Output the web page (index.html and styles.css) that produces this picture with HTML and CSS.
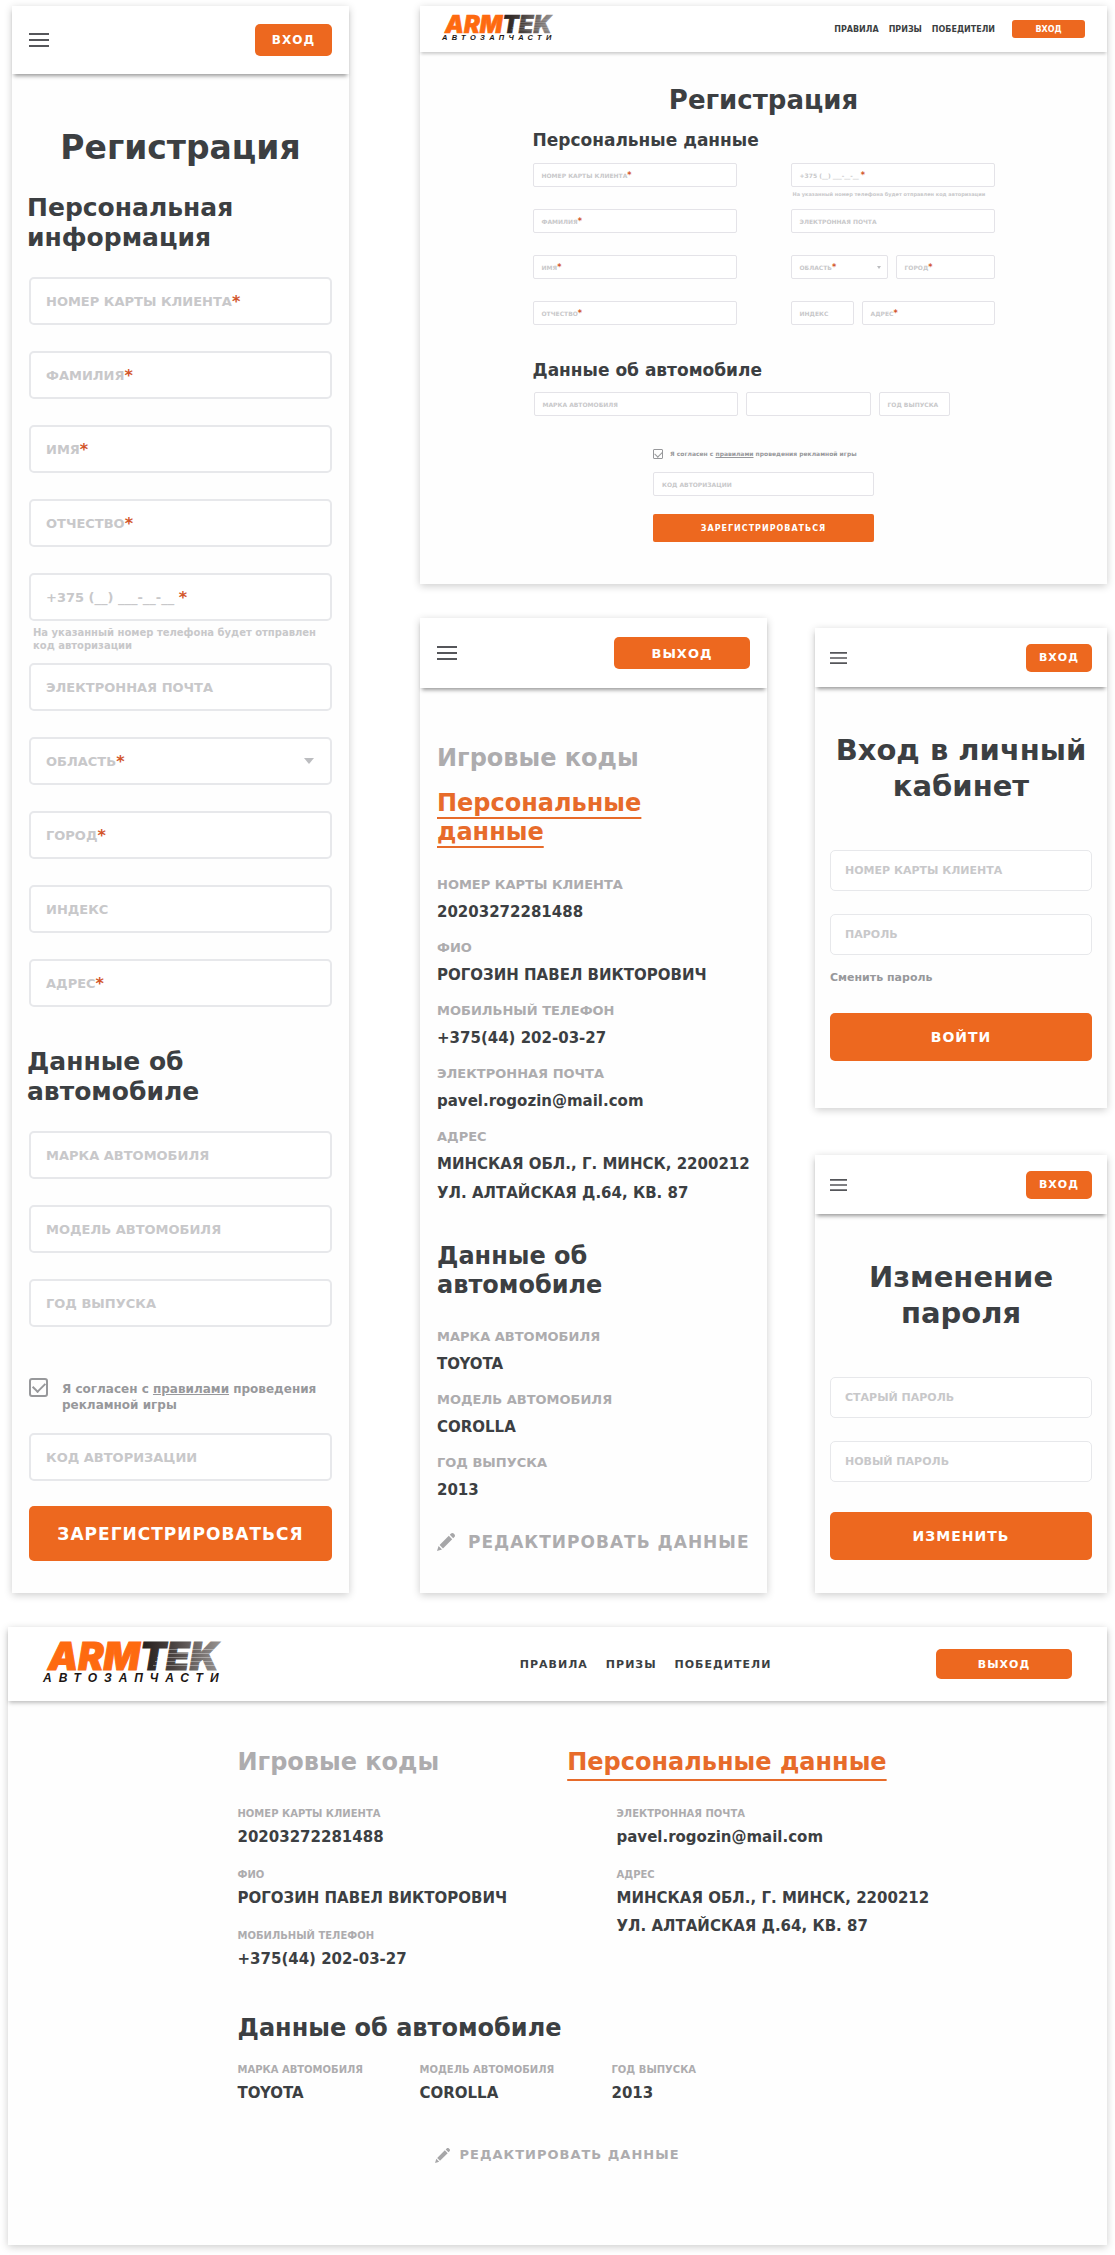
FILE: index.html
```html
<!DOCTYPE html>
<html lang="ru">
  <head>
    <meta charset="UTF-8" />
    <meta name="viewport" content="width=device-width, initial-scale=1.0" />
    <title>ARMTEK Автозапчасти</title>
    <link rel="stylesheet" href="styles.css">
  </head>
  <body>
    <svg class="sprite" aria-hidden="true">
      <defs>
        <linearGradient id="steel" gradientUnits="userSpaceOnUse" x1="90" y1="0" x2="180" y2="0">
          <stop offset="0" stop-color="#1c1512" />
          <stop offset="0.45" stop-color="#4a4341" />
          <stop offset="1" stop-color="#9b9795" />
        </linearGradient>
      </defs>
      <symbol id="logo" viewBox="0 0 186 38" overflow="visible">
        <text class="logo-name" x="5" y="25"><tspan fill="#fe6a10" stroke="#fe6a10">ARM</tspan><tspan fill="url(#steel)" stroke="url(#steel)">TEK</tspan></text>
        <path d="M118 4.5h68M116 8.5h68M114 12.5h68M112 16.5h68M110 20.5h68" stroke="#fff" stroke-width="0.7" opacity="0.5" />
        <text class="logo-sub" x="0" y="37">АВТОЗАПЧАСТИ</text>
      </symbol>
      <symbol id="burger" viewBox="0 0 20 14">
        <path d="M0 1h20M0 7h20M0 13h20" stroke="#55565a" stroke-width="2" />
      </symbol>
      <symbol id="pencil" viewBox="0 0 18 18">
        <path d="M0 18l1.6-5 3.4 3.4zM2.6 12L11.8 2.8l3.4 3.4L6 15.4zM12.8 1.8l1.2-1.2c.8-.8 1.9-.8 2.7 0l.7.7c.8.8.8 1.9 0 2.7l-1.2 1.2z" fill="#a6a6a8" />
      </symbol>
    </svg>

    <main class="board">
      <div class="top">
        <!-- Регистрация, мобильная -->
        <section class="screen mobile">
          <header class="header">
            <button class="burger" aria-label="Меню"><svg><use href="#burger" /></svg></button>
            <button class="btn">ВХОД</button>
          </header>
          <form class="content">
            <h1>Регистрация</h1>
            <h2>Персональная информация</h2>
            <div class="fields">
              <div class="field"><input type="text" id="mCard" /><label for="mCard">НОМЕР КАРТЫ КЛИЕНТА<span>*</span></label></div>
              <div class="field"><input type="text" id="mLast" /><label for="mLast">ФАМИЛИЯ<span>*</span></label></div>
              <div class="field"><input type="text" id="mFirst" /><label for="mFirst">ИМЯ<span>*</span></label></div>
              <div class="field"><input type="text" id="mMiddle" /><label for="mMiddle">ОТЧЕСТВО<span>*</span></label></div>
              <div class="with-hint">
                <div class="field"><input type="tel" id="mPhone" /><label for="mPhone">+375 (__) ___-__-__ <span>*</span></label></div>
                <p class="hint">На указанный номер телефона будет отправлен код авторизации</p>
              </div>
              <div class="field"><input type="email" id="mEmail" /><label for="mEmail">ЭЛЕКТРОННАЯ ПОЧТА</label></div>
              <div class="field select"><select id="mRegion"><option></option></select><label for="mRegion">ОБЛАСТЬ<span>*</span></label></div>
              <div class="field"><input type="text" id="mCity" /><label for="mCity">ГОРОД<span>*</span></label></div>
              <div class="field"><input type="text" id="mIndex" /><label for="mIndex">ИНДЕКС</label></div>
              <div class="field"><input type="text" id="mAddress" /><label for="mAddress">АДРЕС<span>*</span></label></div>
            </div>
            <h2 class="car-title">Данные об автомобиле</h2>
            <div class="fields">
              <div class="field"><input type="text" id="mBrand" /><label for="mBrand">МАРКА АВТОМОБИЛЯ</label></div>
              <div class="field"><input type="text" id="mModel" /><label for="mModel">МОДЕЛЬ АВТОМОБИЛЯ</label></div>
              <div class="field"><input type="text" id="mYear" /><label for="mYear">ГОД ВЫПУСКА</label></div>
            </div>
            <div class="confirm">
              <div class="agree">
                <input type="checkbox" id="mAgree" checked />
                <label for="mAgree">Я согласен с <a href="#rules">правилами</a> проведения рекламной игры</label>
              </div>
              <div class="field"><input type="text" id="mCode" /><label for="mCode">КОД АВТОРИЗАЦИИ</label></div>
              <button type="button" class="submit">ЗАРЕГИСТРИРОВАТЬСЯ</button>
            </div>
          </form>
        </section>

        <div class="right">
          <!-- Регистрация, десктоп -->
          <section class="screen desktop-reg">
            <header class="header">
              <svg class="logo" role="img" aria-label="ARMTEK"><use href="#logo" /></svg>
              <nav>
                <a href="#rules">ПРАВИЛА</a>
                <a href="#prizes">ПРИЗЫ</a>
                <a href="#winners">ПОБЕДИТЕЛИ</a>
              </nav>
              <button class="btn">ВХОД</button>
            </header>
            <form class="content">
              <h1>Регистрация</h1>
              <h2>Персональные данные</h2>
              <div class="columns">
                <div class="fields">
                  <div class="field"><input type="text" id="dCard" /><label for="dCard">НОМЕР КАРТЫ КЛИЕНТА<span>*</span></label></div>
                  <div class="field"><input type="text" id="dLast" /><label for="dLast">ФАМИЛИЯ<span>*</span></label></div>
                  <div class="field"><input type="text" id="dFirst" /><label for="dFirst">ИМЯ<span>*</span></label></div>
                  <div class="field"><input type="text" id="dMiddle" /><label for="dMiddle">ОТЧЕСТВО<span>*</span></label></div>
                </div>
                <div class="fields">
                  <div class="with-hint">
                    <div class="field"><input type="tel" id="dPhone" /><label for="dPhone">+375 (__) ___-__-__ <span>*</span></label></div>
                    <p class="hint">На указанный номер телефона будет отправлен код авторизации</p>
                  </div>
                  <div class="field"><input type="email" id="dEmail" /><label for="dEmail">ЭЛЕКТРОННАЯ ПОЧТА</label></div>
                  <div class="pair region">
                    <div class="field select"><select id="dRegion"><option></option></select><label for="dRegion">ОБЛАСТЬ<span>*</span></label></div>
                    <div class="field"><input type="text" id="dCity" /><label for="dCity">ГОРОД<span>*</span></label></div>
                  </div>
                  <div class="pair street">
                    <div class="field"><input type="text" id="dIndex" /><label for="dIndex">ИНДЕКС</label></div>
                    <div class="field"><input type="text" id="dAddress" /><label for="dAddress">АДРЕС<span>*</span></label></div>
                  </div>
                </div>
              </div>
              <h2 class="car-title">Данные об автомобиле</h2>
              <div class="car-fields">
                <div class="field"><input type="text" id="dBrand" /><label for="dBrand">МАРКА АВТОМОБИЛЯ</label></div>
                <div class="field"><input type="text" id="dModel" aria-label="Модель автомобиля" /></div>
                <div class="field"><input type="text" id="dYear" /><label for="dYear">ГОД ВЫПУСКА</label></div>
              </div>
              <div class="confirm">
                <div class="agree">
                  <input type="checkbox" id="dAgree" checked />
                  <label for="dAgree">Я согласен с <a href="#rules">правилами</a> проведения рекламной игры</label>
                </div>
                <div class="field"><input type="text" id="dCode" /><label for="dCode">КОД АВТОРИЗАЦИИ</label></div>
                <button type="button" class="submit">ЗАРЕГИСТРИРОВАТЬСЯ</button>
              </div>
            </form>
          </section>

          <div class="phones">
            <!-- Личный кабинет, мобильный -->
            <section class="screen profile">
              <header class="header">
                <button class="burger" aria-label="Меню"><svg><use href="#burger" /></svg></button>
                <button class="btn wide">ВЫХОД</button>
              </header>
              <div class="content">
                <nav class="tabs">
                  <a href="#codes">Игровые коды</a>
                  <a href="#personal" class="active">Персональные<br />данные</a>
                </nav>
                <dl class="data">
                  <div><dt>НОМЕР КАРТЫ КЛИЕНТА</dt><dd>20203272281488</dd></div>
                  <div><dt>ФИО</dt><dd>РОГОЗИН ПАВЕЛ ВИКТОРОВИЧ</dd></div>
                  <div><dt>МОБИЛЬНЫЙ ТЕЛЕФОН</dt><dd>+375(44) 202-03-27</dd></div>
                  <div><dt>ЭЛЕКТРОННАЯ ПОЧТА</dt><dd>pavel.rogozin@mail.com</dd></div>
                  <div><dt>АДРЕС</dt><dd>МИНСКАЯ ОБЛ., Г. МИНСК, 2200212<br />УЛ. АЛТАЙСКАЯ Д.64, КВ. 87</dd></div>
                </dl>
                <h2 class="car-title">Данные об<br />автомобиле</h2>
                <dl class="data">
                  <div><dt>МАРКА АВТОМОБИЛЯ</dt><dd>TOYOTA</dd></div>
                  <div><dt>МОДЕЛЬ АВТОМОБИЛЯ</dt><dd>COROLLA</dd></div>
                  <div><dt>ГОД ВЫПУСКА</dt><dd>2013</dd></div>
                </dl>
                <button class="edit"><svg><use href="#pencil" /></svg>РЕДАКТИРОВАТЬ ДАННЫЕ</button>
              </div>
            </section>

            <div class="small-phones">
              <!-- Вход -->
              <section class="screen login">
                <header class="header">
                  <button class="burger" aria-label="Меню"><svg><use href="#burger" /></svg></button>
                  <button class="btn">ВХОД</button>
                </header>
                <form class="content">
                  <h1>Вход в личный кабинет</h1>
                  <div class="fields">
                    <div class="field"><input type="text" id="lCard" /><label for="lCard">НОМЕР КАРТЫ КЛИЕНТА</label></div>
                    <div class="field"><input type="password" id="lPass" /><label for="lPass">ПАРОЛЬ</label></div>
                  </div>
                  <a class="change" href="#change">Сменить пароль</a>
                  <button type="button" class="submit">ВОЙТИ</button>
                </form>
              </section>

              <!-- Изменение пароля -->
              <section class="screen login" id="change">
                <header class="header">
                  <button class="burger" aria-label="Меню"><svg><use href="#burger" /></svg></button>
                  <button class="btn">ВХОД</button>
                </header>
                <form class="content short">
                  <h1>Изменение пароля</h1>
                  <div class="fields">
                    <div class="field"><input type="password" id="cOld" /><label for="cOld">СТАРЫЙ ПАРОЛЬ</label></div>
                    <div class="field"><input type="password" id="cNew" /><label for="cNew">НОВЫЙ ПАРОЛЬ</label></div>
                  </div>
                  <button type="button" class="submit">ИЗМЕНИТЬ</button>
                </form>
              </section>
            </div>
          </div>
        </div>
      </div>

      <!-- Личный кабинет, десктоп -->
      <section class="screen desktop-profile">
        <header class="header">
          <svg class="logo" role="img" aria-label="ARMTEK"><use href="#logo" /></svg>
          <nav>
            <a href="#rules">ПРАВИЛА</a>
            <a href="#prizes">ПРИЗЫ</a>
            <a href="#winners">ПОБЕДИТЕЛИ</a>
          </nav>
          <button class="btn wide">ВЫХОД</button>
        </header>
        <div class="content">
          <nav class="tabs">
            <a href="#codes">Игровые коды</a>
            <a href="#personal" class="active">Персональные данные</a>
          </nav>
          <div class="person">
            <dl class="data">
              <div><dt>НОМЕР КАРТЫ КЛИЕНТА</dt><dd>20203272281488</dd></div>
              <div><dt>ФИО</dt><dd>РОГОЗИН ПАВЕЛ ВИКТОРОВИЧ</dd></div>
              <div><dt>МОБИЛЬНЫЙ ТЕЛЕФОН</dt><dd>+375(44) 202-03-27</dd></div>
            </dl>
            <dl class="data">
              <div><dt>ЭЛЕКТРОННАЯ ПОЧТА</dt><dd>pavel.rogozin@mail.com</dd></div>
              <div><dt>АДРЕС</dt><dd>МИНСКАЯ ОБЛ., Г. МИНСК, 2200212<br />УЛ. АЛТАЙСКАЯ Д.64, КВ. 87</dd></div>
            </dl>
          </div>
          <h2 class="car-title">Данные об автомобиле</h2>
          <dl class="data car">
            <div><dt>МАРКА АВТОМОБИЛЯ</dt><dd>TOYOTA</dd></div>
            <div><dt>МОДЕЛЬ АВТОМОБИЛЯ</dt><dd>COROLLA</dd></div>
            <div><dt>ГОД ВЫПУСКА</dt><dd>2013</dd></div>
          </dl>
          <button class="edit"><svg><use href="#pencil" /></svg>РЕДАКТИРОВАТЬ ДАННЫЕ</button>
        </div>
      </section>
    </main>
  </body>
</html>
```
FILE: styles.css
```css
* {
  box-sizing: border-box;
}

body {
  margin: 0;
  background: #fff;
  color: #3c3f42;
  font-family: Verdana, "DejaVu Sans", sans-serif;
  font-weight: bold;
}

h1,
h2,
p,
dl,
dd {
  margin: 0;
}

a {
  color: inherit;
  text-decoration: none;
}

button,
input,
select {
  font: inherit;
  margin: 0;
}

button {
  border: none;
  padding: 0;
  cursor: pointer;
}

.sprite {
  position: absolute;
  width: 0;
  height: 0;
}

/* board */
.board {
  padding: 6px 8px 10px;
}

.top {
  display: flex;
  gap: 71px;
  padding-left: 4px;
  margin-bottom: 34px;
}

.mobile {
  flex: 337;
}

.right {
  flex: 687;
  min-width: 0;
}

.phones {
  display: flex;
  gap: 48px;
  margin-top: 34px;
}

.profile {
  flex: 347;
}

.small-phones {
  flex: 292;
  display: flex;
  flex-direction: column;
  gap: 47px;
  padding-top: 10px;
}

.screen {
  background: #fefefe;
  box-shadow: 0 2px 8px rgba(0, 0, 0, 0.2);
  min-width: 0;
}

/* header */
.header {
  display: flex;
  align-items: center;
  justify-content: space-between;
  height: 68px;
  padding: 0 17px;
  background: #fff;
  box-shadow: 0 4px 4px -2px rgba(0, 0, 0, 0.4);
}

.burger {
  background: none;
  width: 20px;
  height: 14px;
}

.burger svg {
  display: block;
  width: 100%;
  height: 100%;
}

.btn {
  width: 77px;
  height: 32px;
  border-radius: 5px;
  background: #ed681f;
  color: #fff;
  font-size: 12px;
  letter-spacing: 1px;
}

.header nav {
  display: flex;
}

.logo {
  overflow: visible;
}

.logo-name {
  font-family: Inter, "Liberation Sans", sans-serif;
  font-style: italic;
  font-weight: 900;
  font-size: 38px;
  stroke-width: 1px;
}

.logo-sub {
  font-family: "Liberation Sans", sans-serif;
  font-style: italic;
  font-weight: bold;
  font-size: 12px;
  letter-spacing: 7px;
  fill: #1c1512;
}

/* forms */
.content {
  padding: 54px 17px 31px;
}

h1 {
  font-size: 33px;
  line-height: 40px;
  text-align: center;
}

h2 {
  font-size: 24px;
  line-height: 30px;
}

.mobile h2 {
  margin: 25px 0 24px -2px;
  font-size: 25px;
}

.mobile .car-title {
  margin-top: 40px;
}

.fields {
  display: flex;
  flex-direction: column;
  gap: 26px;
}

.field {
  position: relative;
  height: 48px;
  color: #c8c8ca;
  font-size: 13px;
}

.field input,
.field select {
  display: block;
  width: 100%;
  height: 100%;
  padding: 0 17px;
  border: 2px solid #e7e8eb;
  border-radius: 5px;
  background: #fff;
  color: #3c3f42;
  appearance: none;
}

.field label {
  position: absolute;
  left: 17px;
  top: 0;
  bottom: 0;
  display: flex;
  align-items: center;
  white-space: pre;
  pointer-events: none;
}

.field label span {
  color: #d2552b;
  font-size: 16px;
}

.select::after {
  content: "";
  position: absolute;
  right: 18px;
  top: 21px;
  border: 5px solid transparent;
  border-top: 6px solid #bcbdc0;
  border-bottom: none;
}

.hint {
  color: #c8c8ca;
  font-size: 10px;
  line-height: 13px;
  margin: 5px 0 -15px 4px;
}

.confirm {
  display: flex;
  flex-direction: column;
  margin-top: 51px;
}

.agree {
  display: flex;
  gap: 14px;
  margin-bottom: 20px;
  color: #97989b;
  font-size: 12px;
  line-height: 16px;
}

.agree label {
  padding-top: 3px;
}

.agree a {
  text-decoration: underline;
}

.agree input {
  flex: none;
  width: 19px;
  height: 19px;
  appearance: none;
  border: 2px solid #97989b;
  border-radius: 3px;
  display: grid;
  place-items: center;
}

.agree input:checked::before {
  content: "";
  width: 10px;
  height: 6px;
  margin-bottom: 3px;
  border: solid #97989b;
  border-width: 0 0 2px 2px;
  transform: rotate(-45deg);
}

.submit {
  width: 100%;
  height: 55px;
  border-radius: 5px;
  background: #ed681f;
  color: #fff;
  font-size: 17px;
  letter-spacing: 1px;
}

.mobile .submit {
  margin-top: 25px;
}

/* desktop registration */
.desktop-reg .header {
  height: 46px;
  padding: 0 22px;
  box-shadow: 0 3px 3px -1px rgba(0, 0, 0, 0.2);
}

.desktop-reg .logo {
  width: 116px;
  height: 24px;
}

.desktop-reg nav {
  gap: 10px;
  margin: 0 17px 0 auto;
  font-size: 8px;
}

.desktop-reg .btn {
  width: 73px;
  height: 18px;
  border-radius: 3px;
  font-size: 8px;
  letter-spacing: 0;
}

.desktop-reg .content {
  max-width: 462px;
  margin: 0 auto;
  padding: 33px 0 42px;
}

.desktop-reg h1 {
  font-size: 26px;
  line-height: 30px;
}

.desktop-reg h2 {
  font-size: 17px;
  line-height: 22px;
  margin: 14px 0 12px;
}

.desktop-reg .car-title {
  margin: 34px 0 11px;
}

.columns {
  display: grid;
  grid-template-columns: 1fr 1fr;
  gap: 54px;
}

.desktop-reg .fields {
  gap: 22px;
}

.desktop-reg .field {
  height: 24px;
  font-size: 6px;
}

.desktop-reg .field input,
.desktop-reg .field select {
  padding: 0 8px;
  border: 1px solid #e4e3e8;
  border-radius: 2px;
}

.desktop-reg .field label {
  left: 9px;
}

.desktop-reg .field label span {
  font-size: 8px;
}

.desktop-reg .select::after {
  right: 7px;
  top: 11px;
  border-width: 3px 2px 0;
}

.desktop-reg .hint {
  font-size: 5px;
  line-height: 8px;
  margin: 3px 0 -11px 2px;
  white-space: nowrap;
}

.pair {
  display: grid;
  gap: 8px;
}

.region {
  grid-template-columns: 97fr 99fr;
}

.street {
  grid-template-columns: 63fr 133fr;
}

.car-fields {
  display: grid;
  grid-template-columns: 204fr 125fr 71fr;
  gap: 8px;
  margin: 0 45px 0 1px;
}

.desktop-reg .confirm {
  width: 221px;
  margin: 33px auto 0;
}

.desktop-reg .agree {
  gap: 7px;
  margin-bottom: 13px;
  font-size: 6px;
  line-height: 10px;
}

.desktop-reg .agree label {
  padding: 0;
  white-space: nowrap;
}

.desktop-reg .agree input {
  width: 10px;
  height: 10px;
  border-width: 1px;
  border-radius: 1px;
}

.desktop-reg .agree input:checked::before {
  width: 6px;
  height: 4px;
  margin-bottom: 2px;
  border-width: 0 0 1px 1px;
}

.desktop-reg .submit {
  height: 28px;
  margin-top: 18px;
  border-radius: 2px;
  font-size: 8px;
}

/* profile */
.profile .header {
  height: 70px;
}

.btn.wide {
  width: 136px;
}

.profile .btn {
  font-size: 13px;
}

.profile .content {
  padding: 56px 10px 39px 17px;
}

.tabs {
  display: flex;
  flex-direction: column;
  align-items: flex-start;
  gap: 16px;
  margin-bottom: 24px;
  color: #adacae;
  font-size: 24px;
  line-height: 29px;
}

.tabs .active {
  color: #e76b2a;
  text-decoration: underline;
  text-decoration-thickness: 2px;
  text-decoration-skip-ink: none;
  text-underline-offset: 6px;
}

.data {
  display: flex;
  flex-direction: column;
  gap: 7px;
}

.data dt {
  color: #adacae;
  font-size: 13px;
  line-height: 27px;
}

.data dd {
  font-size: 15px;
  line-height: 29px;
  white-space: nowrap;
}

.profile .car-title {
  margin: 34px 0 23px;
  line-height: 29px;
}

.edit {
  display: flex;
  align-items: center;
  gap: 13px;
  margin-top: 25px;
  background: none;
  color: #adacae;
  font-size: 17px;
  line-height: 24px;
  letter-spacing: 1px;
  white-space: nowrap;
}

.edit svg {
  width: 18px;
  height: 18px;
}

/* login and password */
.login .header {
  height: 59px;
  padding: 0 15px;
}

.login .burger {
  width: 17px;
  height: 12px;
}

.login .btn {
  width: 66px;
  height: 28px;
  font-size: 11px;
}

.login .content {
  padding: 45px 15px 47px;
}

.login h1 {
  font-size: 29px;
  line-height: 36px;
  margin: 0 -15px 46px;
}

.login .fields {
  gap: 23px;
}

.login .field {
  height: 41px;
  font-size: 11px;
}

.login .field input {
  border-width: 1px;
}

.login .field label {
  left: 15px;
}

.change {
  display: block;
  margin-top: 15px;
  color: #97989b;
  font-size: 11px;
  line-height: 16px;
}

.login .submit {
  height: 48px;
  margin-top: 27px;
  font-size: 14px;
}

.login .short {
  padding-bottom: 33px;
}

.short .submit {
  margin-top: 30px;
}

/* desktop profile */
.desktop-profile .header {
  height: 74px;
  padding: 0 35px;
  box-shadow: 0 3px 4px -1px rgba(0, 0, 0, 0.25);
}

.desktop-profile .logo {
  width: 186px;
  height: 38px;
}

.desktop-profile .header nav {
  gap: 18px;
  margin: 0 16% 0 auto;
  font-size: 11px;
  letter-spacing: 1px;
}

.desktop-profile .btn {
  height: 30px;
  font-size: 11px;
}

.desktop-profile .content {
  max-width: 640px;
  margin: 0 auto;
  padding: 46px 0 80px;
}

.desktop-profile .tabs {
  flex-direction: row;
  gap: 128px;
  margin-bottom: 28px;
  line-height: 30px;
  white-space: nowrap;
}

.desktop-profile .tabs .active {
  text-underline-offset: 9px;
}

.person {
  display: grid;
  grid-template-columns: minmax(0, 379fr) minmax(0, 261fr);
}

.desktop-profile .data {
  gap: 15px;
}

.desktop-profile .data dt {
  font-size: 10px;
  line-height: 18px;
}

.desktop-profile .data dd {
  line-height: 28px;
}

.desktop-profile .car-title {
  margin: 40px 0 18px;
}

.desktop-profile .car {
  display: grid;
  grid-template-columns: 182fr 192fr 266fr;
  gap: 0;
}

.desktop-profile .edit {
  gap: 9px;
  margin: 38px auto 0;
  font-size: 13px;
  line-height: 20px;
}

.desktop-profile .edit svg {
  width: 15px;
  height: 15px;
}
```
